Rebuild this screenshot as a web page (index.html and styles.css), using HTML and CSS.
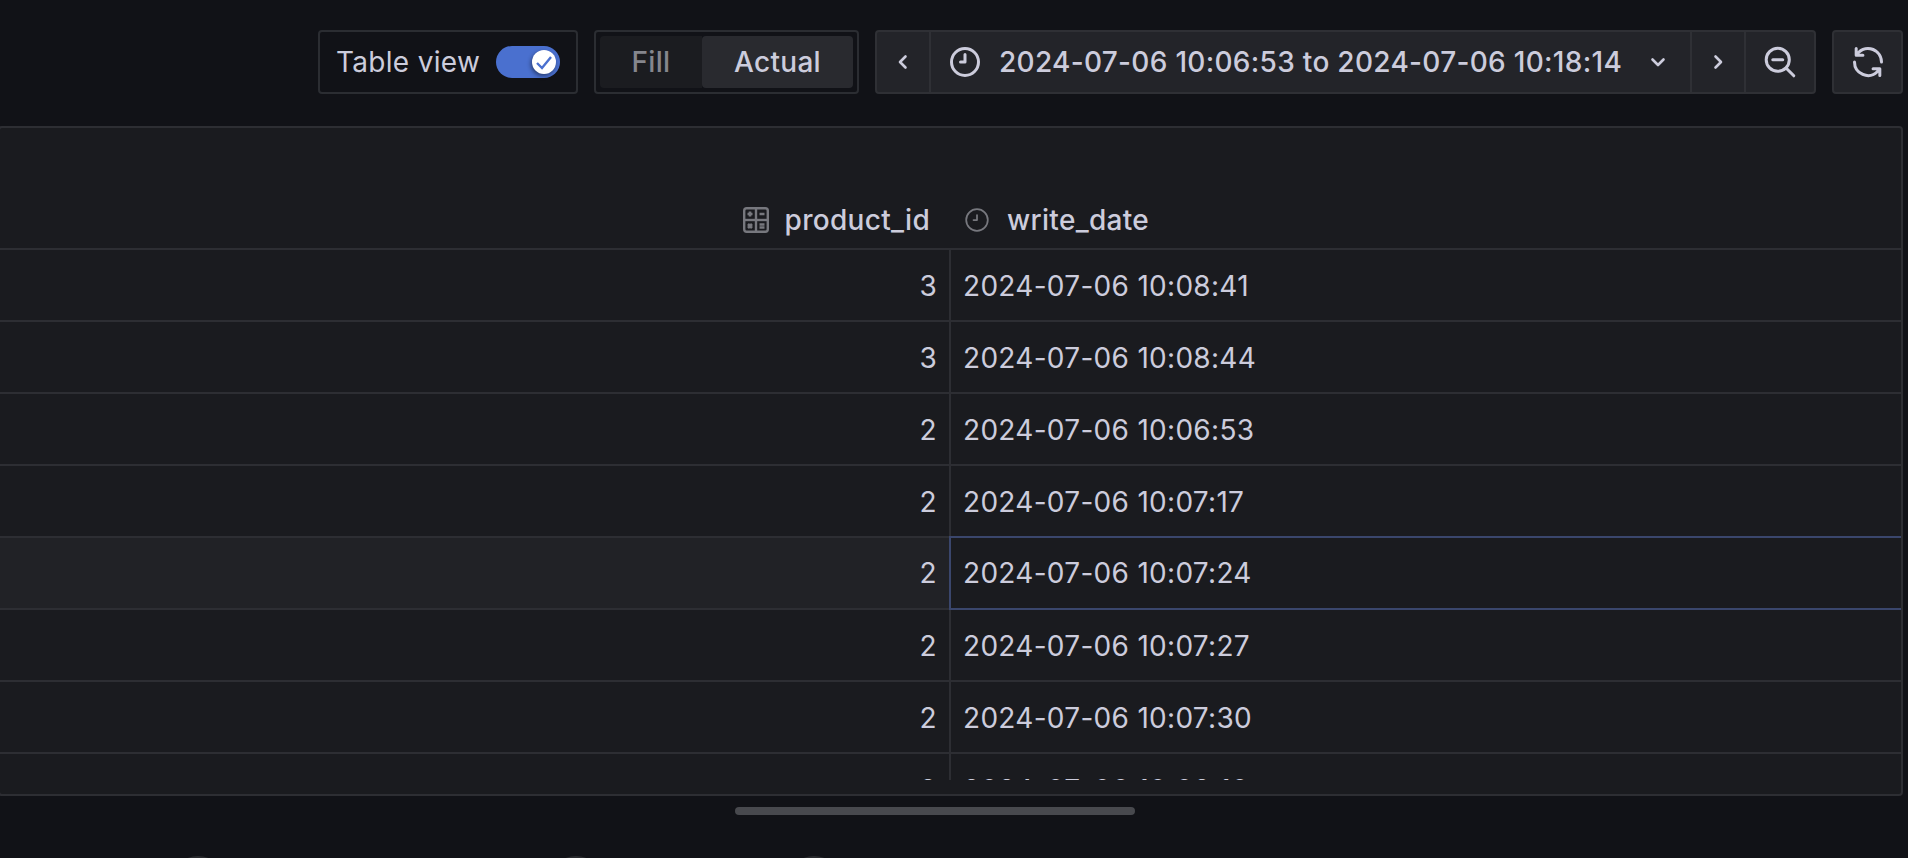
FILE: index.html
```html
<!DOCTYPE html>
<html lang="en">
<head>
<meta charset="utf-8">
<title>Explore table</title>
<link rel="stylesheet" href="styles.css">
</head>
<body>
<header class="toolbar">
  <div class="switch-box">
    <span class="switch-label">Table view</span>
    <span class="switch">
      <span class="knob">
        <svg class="knob-check" viewBox="0 0 24 24"><polyline points="5,13 10,18 19,7"/></svg>
      </span>
    </span>
  </div>
  <div class="segments">
    <span class="segment">Fill</span>
    <span class="segment segment-active">Actual</span>
  </div>
  <div class="time-picker">
    <span class="tool tool-prev">
      <svg class="icon-line chevron" viewBox="0 0 24 24"><polyline points="14.5,6.5 9,12 14.5,17.5"/></svg>
    </span>
    <span class="tool tool-range">
      <svg class="icon-fill icon-36" viewBox="0 0 24 24"><path d="M12,2A10,10,0,1,0,22,12,10.01,10.01,0,0,0,12,2Zm0,18a8,8,0,1,1,8-8A8.01,8.01,0,0,1,12,20ZM12,6a1,1,0,0,0-1,1v4H9a1,1,0,0,0,0,2h3a1,1,0,0,0,1-1V7A1,1,0,0,0,12,6Z"/></svg>
      <span class="range-text">2024-07-06 10:06:53 to 2024-07-06 10:18:14</span>
      <svg class="icon-line chevron" viewBox="0 0 24 24"><polyline points="6.5,9.5 12,15 17.5,9.5"/></svg>
    </span>
    <span class="tool tool-next">
      <svg class="icon-line chevron" viewBox="0 0 24 24"><polyline points="9.5,6.5 15,12 9.5,17.5"/></svg>
    </span>
    <span class="tool tool-zoom">
      <svg class="icon-line icon-36" viewBox="0 0 24 24"><circle cx="10.5" cy="10.5" r="7.7"/><line x1="7.2" y1="10.5" x2="13.8" y2="10.5"/><line x1="16.2" y1="16.2" x2="21.2" y2="21.2"/></svg>
    </span>
  </div>
  <div class="refresh">
    <svg class="icon-fill icon-36" viewBox="0 0 24 24"><path d="M19.91,15.51H15.38a1,1,0,0,0,0,2h2.4A8,8,0,0,1,4,12a1,1,0,0,0-2,0,10,10,0,0,0,16.88,7.23V21a1,1,0,0,0,2,0V16.5A1,1,0,0,0,19.91,15.51ZM12,2A10,10,0,0,0,5.12,4.77V3a1,1,0,0,0-2,0V7.5a1,1,0,0,0,1,1h4.5a1,1,0,0,0,0-2H6.22A8,8,0,0,1,20,12a1,1,0,0,0,2,0A10,10,0,0,0,12,2Z"/></svg>
  </div>
</header>

<section class="panel">
  <div class="head">
    <div class="head-cell head-product">
      <svg class="head-calc" viewBox="0 0 26 26">
        <rect class="calc-frame" x="1.2" y="1.2" width="23.6" height="23.6" rx="2.5"/>
        <line class="calc-frame" x1="13" y1="1" x2="13" y2="25"/>
        <line class="calc-frame" x1="1" y1="13" x2="25" y2="13"/>
        <path class="calc-sign" d="M7,4.500V9.500M4.500,7H9.500M16.500,7H21.500M5,17L9,21M9,17L5,21M16.500,17.500H21.500M16.500,20.500H21.500"/>
      </svg>
      <span class="head-label">product_id</span>
    </div>
    <div class="head-cell head-date">
      <svg class="head-clock" viewBox="0 0 24 24"><path d="M12,2A10,10,0,1,0,22,12,10.01,10.01,0,0,0,12,2Zm0,18.500a8.500,8.500,0,1,1,8.500-8.500A8.510,8.510,0,0,1,12,20.500ZM12,7a.75.75,0,0,0-.75.750v3.500H9a.75.75,0,0,0,0,1.500h3a.75.75,0,0,0,.75-.75V7.750A.75.75,0,0,0,12,7Z"/></svg>
      <span class="head-label">write_date</span>
    </div>
  </div>
  <div class="rows">
    <div class="row"><div class="cell-num">3</div><div class="cell-date">2024-07-06 10:08:41</div></div>
    <div class="row"><div class="cell-num">3</div><div class="cell-date">2024-07-06 10:08:44</div></div>
    <div class="row"><div class="cell-num">2</div><div class="cell-date">2024-07-06 10:06:53</div></div>
    <div class="row"><div class="cell-num">2</div><div class="cell-date">2024-07-06 10:07:17</div></div>
    <div class="row row-hover"><div class="cell-num">2</div><div class="cell-date">2024-07-06 10:07:24</div></div>
    <div class="row"><div class="cell-num">2</div><div class="cell-date">2024-07-06 10:07:27</div></div>
    <div class="row"><div class="cell-num">2</div><div class="cell-date">2024-07-06 10:07:30</div></div>
    <div class="row"><div class="cell-num">2</div><div class="cell-date">2024-07-06 10:08:10</div></div>
  </div>
</section>

<div class="scroll-track"><div class="scroll-thumb"></div></div>

<div class="peek">
  <span class="peek-dot peek-a"></span>
  <span class="peek-dot peek-b"></span>
  <span class="peek-dot peek-c"></span>
</div>
</body>
</html>
```

FILE: styles.css
```css
* { box-sizing: border-box; }

html, body {
  margin: 0;
  height: 858px;
  overflow: hidden;
}

body {
  background: #111217;
  color: #ccccdc;
  font-family: Inter, "Liberation Sans", sans-serif;
  font-size: 28px;
  line-height: 40px;
  letter-spacing: 0.3px;
}

.toolbar {
  display: flex;
  justify-content: flex-end;
  gap: 16px;
  height: 94px;
  padding: 30px 5px 0 0;
}

.switch-box {
  display: flex;
  align-items: center;
  justify-content: space-between;
  width: 260px;
  height: 64px;
  padding: 0 16px;
  border: 2px solid #2b2d32;
  border-radius: 4px;
}

.switch-label { white-space: nowrap; }

.switch {
  display: flex;
  align-items: center;
  justify-content: flex-end;
  flex: none;
  width: 64px;
  height: 32px;
  padding-right: 4px;
  border-radius: 16px;
  background: #4a70cf;
}

.knob {
  display: flex;
  width: 24px;
  height: 24px;
  border-radius: 50%;
  background: #fff;
  box-shadow: -1px 2px 4px rgba(0, 0, 0, 0.45);
}

.knob-check {
  width: 24px;
  height: 24px;
  fill: none;
  stroke: #4a70cf;
  stroke-width: 2.4;
}

.segments {
  display: flex;
  width: 265px;
  height: 64px;
  padding: 4px;
  border: 2px solid #2b2d32;
  border-radius: 4px;
}

.segment {
  display: flex;
  align-items: center;
  justify-content: center;
  width: 102px;
  font-weight: 500;
  color: #85868d;
  background: #1b1c20;
  border-radius: 4px 0 0 4px;
}

.segment-active {
  width: 151px;
  color: #ccccdc;
  background: #292a2f;
  border-radius: 4px;
}

.time-picker {
  display: flex;
  width: 941px;
  height: 64px;
  background: #232429;
  border: 2px solid #2f3035;
  border-radius: 4px;
}

.tool {
  display: flex;
  align-items: center;
  justify-content: center;
  flex: none;
  border-right: 2px solid #2f3035;
}

.tool-prev { width: 54px; }

.tool-range {
  justify-content: flex-start;
  width: 761px;
  padding: 0 20px 0 16px;
}

.tool-next { width: 54px; }

.tool-zoom {
  flex: 1;
  border-right: 0;
}

.range-text {
  margin-left: 16px;
  font-weight: 500;
  white-space: nowrap;
}

.refresh {
  display: flex;
  align-items: center;
  justify-content: center;
  width: 71px;
  height: 64px;
  background: #232429;
  border: 2px solid #2f3035;
  border-radius: 4px;
}

.icon-36 {
  flex: none;
  width: 36px;
  height: 36px;
}

.chevron {
  flex: none;
  width: 24px;
  height: 24px;
  stroke-width: 2.6;
}

.tool-range .chevron { margin-left: auto; }

.icon-line {
  fill: none;
  stroke: #ccccdc;
  stroke-linecap: round;
  stroke-linejoin: round;
}

.icon-36.icon-line { stroke-width: 2; }

.icon-fill { fill: #ccccdc; }

.panel {
  width: 1905px;
  height: 670px;
  margin: 32px 0 0 -2px;
  background: #1a1b1f;
  border: 2px solid #2d2e33;
  border-radius: 4px;
}

.head {
  display: flex;
  align-items: flex-end;
  height: 122px;
  border-bottom: 2px solid #2d2e33;
  font-weight: 500;
}

.head-cell {
  display: flex;
  align-items: center;
  height: 56px;
}

.head-product {
  justify-content: flex-end;
  width: 949px;
  padding-right: 19px;
}

.head-date { padding-left: 14px; }

.head-calc {
  width: 26px;
  height: 26px;
  margin-right: 16px;
}

.calc-frame {
  fill: none;
  stroke: #77787e;
  stroke-width: 2.4;
}

.calc-sign {
  fill: none;
  stroke: #77787e;
  stroke-width: 2.6;
}

.head-clock {
  width: 28px;
  height: 28px;
  margin-right: 16px;
  fill: #77787e;
}

.head-label { white-space: nowrap; }

.rows {
  height: 530px;
  overflow: hidden;
}

.row {
  display: flex;
  height: 72px;
  border-bottom: 2px solid #2d2e33;
}

.cell-num {
  display: flex;
  align-items: center;
  justify-content: flex-end;
  width: 949px;
  padding: 2px 12px 0 0;
}

.cell-date {
  display: flex;
  align-items: center;
  flex: 1;
  padding: 2px 0 0 12px;
  border-left: 2px solid #2d2e33;
}

.row-hover .cell-num {
  padding-top: 0;
  background: #212226;
}

.row-hover .cell-date {
  margin-top: -2px;
  margin-bottom: -2px;
  padding-top: 0;
  border: 2px solid #3a466c;
  border-right: 0;
}

.scroll-track {
  margin-top: 11px;
  padding-left: 735px;
}

.scroll-thumb {
  width: 400px;
  height: 8px;
  border-radius: 4px;
  background: #48494e;
}

.peek {
  display: flex;
  height: 2px;
  margin-top: 41px;
  overflow: hidden;
}

.peek-dot {
  flex: none;
  width: 56px;
  height: 56px;
  border-radius: 50%;
  background: #2a2b2f;
}

.peek-a { margin-left: 170px; }
.peek-b { margin-left: 322px; }
.peek-c { margin-left: 182px; }
```
